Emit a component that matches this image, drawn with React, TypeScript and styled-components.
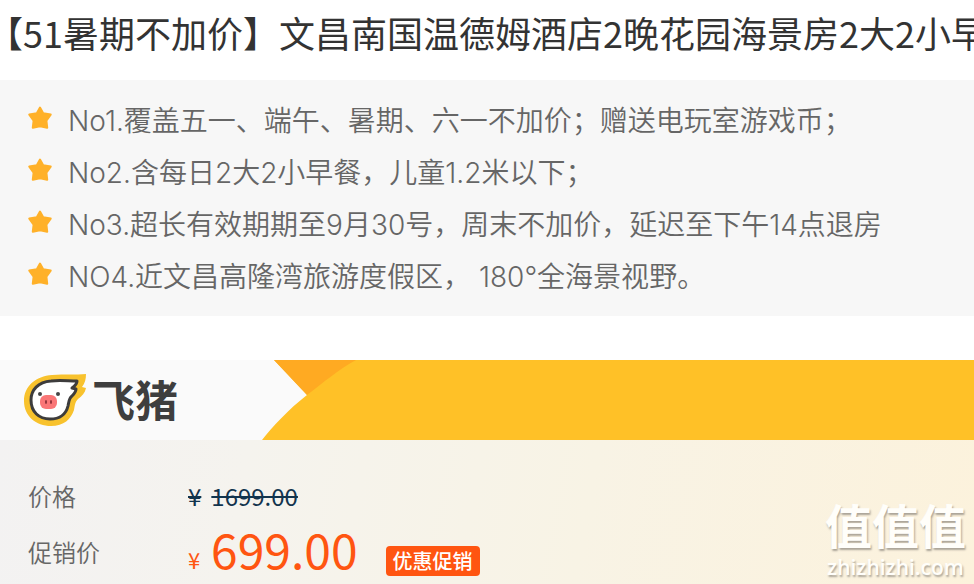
import React from "react";
import styled, { createGlobalStyle } from "styled-components";

const GlobalStyle = createGlobalStyle`
  * { box-sizing: border-box; }
  body {
    margin: 0;
    background: #fff;
    font-family: "Noto Sans CJK SC", sans-serif;
  }
`;

const Page = styled.main`
  display: flex;
  flex-direction: column;
  min-height: 100vh;
  overflow: hidden;
`;

const Title = styled.h1`
  margin: 0 0 0 -13px;
  padding: 4px 0 20px;
  color: #333;
  font-size: 36px;
  font-weight: 400;
  line-height: 56px;
  white-space: nowrap;
`;

const Highlights = styled.ul`
  margin: 0 0 44px;
  padding: 15px 28px 13px;
  background: #f7f7f7;
  list-style: none;
`;

const Highlight = styled.li`
  display: flex;
  align-items: center;
  gap: 16px;
  color: #666;
  font-family: Inter, "Noto Sans CJK SC", sans-serif;
  font-size: 28px;
  font-weight: 350;
  line-height: 52px;
  white-space: pre;
`;

const StarIcon = styled.svg`
  flex: none;
  width: 24px;
  height: 24px;
  margin-bottom: 6px;
`;

const Banner = styled.header`
  display: flex;
  height: 80px;
  background: #fafafa;
`;

const Brand = styled.div`
  display: flex;
  align-items: center;
  flex: none;
  gap: 4px;
  width: 262px;
  padding-left: 24px;
`;

const PigIcon = styled.svg`
  width: 64px;
  height: 54px;
`;

const BrandName = styled.span`
  padding-bottom: 4px;
  color: #3e3e3e;
  font-size: 43px;
  font-weight: 700;
  line-height: 56px;
`;

const RibbonEdge = styled.svg`
  flex: none;
  width: 94px;
  height: 80px;
`;

const Ribbon = styled.div`
  flex: 1;
  background: #ffc127;
`;

const Prices = styled.section`
  position: relative;
  flex: 1;
  padding: 28px 28px 0;
  background: linear-gradient(100deg, #f3f2f2 0%, #f5f3ee 25%, #f8f3e5 60%, #fcf2dc 100%);
`;

const PriceList = styled.dl`
  display: grid;
  grid-template-columns: 160px 1fr;
  grid-auto-rows: 56px;
  margin: 0;
`;

const PriceLabel = styled.dt`
  color: #666;
  font-size: 24px;
  font-weight: 350;
  line-height: 56px;
`;

const PriceValue = styled.dd<{ $large?: boolean }>`
  display: flex;
  align-items: baseline;
  margin: 0;
  line-height: ${(p) => (p.$large ? 48 : 56)}px;
  white-space: nowrap;
`;

const OldPrice = styled.del`
  color: #12344d;
  font-size: 24px;
  text-decoration-thickness: 2px;
`;

const OldCurrency = styled(OldPrice)`
  margin-right: 10px;
`;

const Currency = styled.span`
  width: 23px;
  color: #ff5511;
  font-size: 22px;
`;

const SalePrice = styled.strong`
  color: #ff5511;
  font-size: 48px;
  font-weight: 400;
`;

const Badge = styled.span`
  margin-left: 28px;
  padding: 0 7px;
  border-radius: 4px;
  background: #ff5511;
  color: #fff;
  font-size: 20px;
  font-weight: 500;
  line-height: 30px;
`;

const Watermark = styled.div`
  position: absolute;
  right: 8px;
  bottom: 4px;
  color: #fffefa;
  text-align: center;
  text-shadow: 1px 2px 2px #aaa397;
`;

const WatermarkName = styled.div`
  font-size: 47px;
  font-weight: 700;
  line-height: 60px;
`;

const WatermarkSite = styled.div`
  font-family: "Open Sans", sans-serif;
  font-size: 21px;
  font-weight: 600;
  line-height: 26px;
`;

const highlights = [
  "No1.覆盖五一、端午、暑期、六一不加价；赠送电玩室游戏币；",
  "No2.含每日2大2小早餐，儿童1.2米以下；",
  "No3.超长有效期期至9月30号，周末不加价，延迟至下午14点退房",
  "NO4.近文昌高隆湾旅游度假区， 180°全海景视野。",
];

const Star = () => (
  <StarIcon viewBox="0 0 24 24" aria-hidden="true">
    <path
      d="M12 1.5 15.2 7.2 22.7 8.6 18.4 14.6 19.2 21.7 12 20.3 4.8 21.7 5.6 14.6 1.3 8.6 8.8 7.2Z"
      fill="#ffb129"
      stroke="#ffb129"
      strokeWidth="2"
      strokeLinejoin="round"
    />
  </StarIcon>
);

const Pig = () => (
  <PigIcon viewBox="0 0 64 54" aria-hidden="true">
    <path
      d="M62 1C52 2 41 1 28 2 12 3 0 13 0 28c0 15 12 25 27 25 13 0 20-7 23-16 1-5 1-8 4-11 4-3 7-6 8-11l-4-1c3-4 4-8 4-13Z"
      fill="#f8c22d"
    />
    <path
      d="M53 8C44 8 35 7 27 8 14 9 7 17 7 27c0 12 8 19 19 19 10 0 16-5 18-13 1-5 1-8 4-10 2-2 4-4 4-7l-4-1c3-2 5-4 5-7Z"
      fill="#fff"
      stroke="#3d3c3c"
      strokeWidth="3"
      strokeLinejoin="round"
    />
    <rect x="16" y="22" width="17" height="14" rx="6" fill="#fa7677" />
    <circle cx="16" cy="21" r="2" fill="#454545" />
    <circle cx="34" cy="21" r="2" fill="#454545" />
    <ellipse cx="22" cy="29" rx="1" ry="2" fill="#8f3037" />
    <ellipse cx="27" cy="29" rx="1" ry="2" fill="#8f3037" />
  </PigIcon>
);

export default function App() {
  return (
    <>
      <GlobalStyle />
      <Page>
        <Title>【51暑期不加价】文昌南国温德姆酒店2晚花园海景房2大2小早</Title>
        <Highlights>
          {highlights.map((text) => (
            <Highlight key={text}>
              <Star />
              <span>{text}</span>
            </Highlight>
          ))}
        </Highlights>
        <Banner>
          <Brand>
            <Pig />
            <BrandName>飞猪</BrandName>
          </Brand>
          <RibbonEdge viewBox="0 0 94 80" aria-hidden="true">
            <path d="M12 0H94V80H0C10 67 27 49 45 35Z" fill="#ffc127" />
            <path d="M12 0H94C76 10 62 22 45 35Z" fill="#ffaa22" />
          </RibbonEdge>
          <Ribbon />
        </Banner>
        <Prices>
          <PriceList>
            <PriceLabel>价格</PriceLabel>
            <PriceValue>
              <OldCurrency>¥</OldCurrency>
              <OldPrice>1699.00</OldPrice>
            </PriceValue>
            <PriceLabel>促销价</PriceLabel>
            <PriceValue $large>
              <Currency>¥</Currency>
              <SalePrice>699.00</SalePrice>
              <Badge>优惠促销</Badge>
            </PriceValue>
          </PriceList>
          <Watermark>
            <WatermarkName>值值值</WatermarkName>
            <WatermarkSite>zhizhizhi.com</WatermarkSite>
          </Watermark>
        </Prices>
      </Page>
    </>
  );
}
